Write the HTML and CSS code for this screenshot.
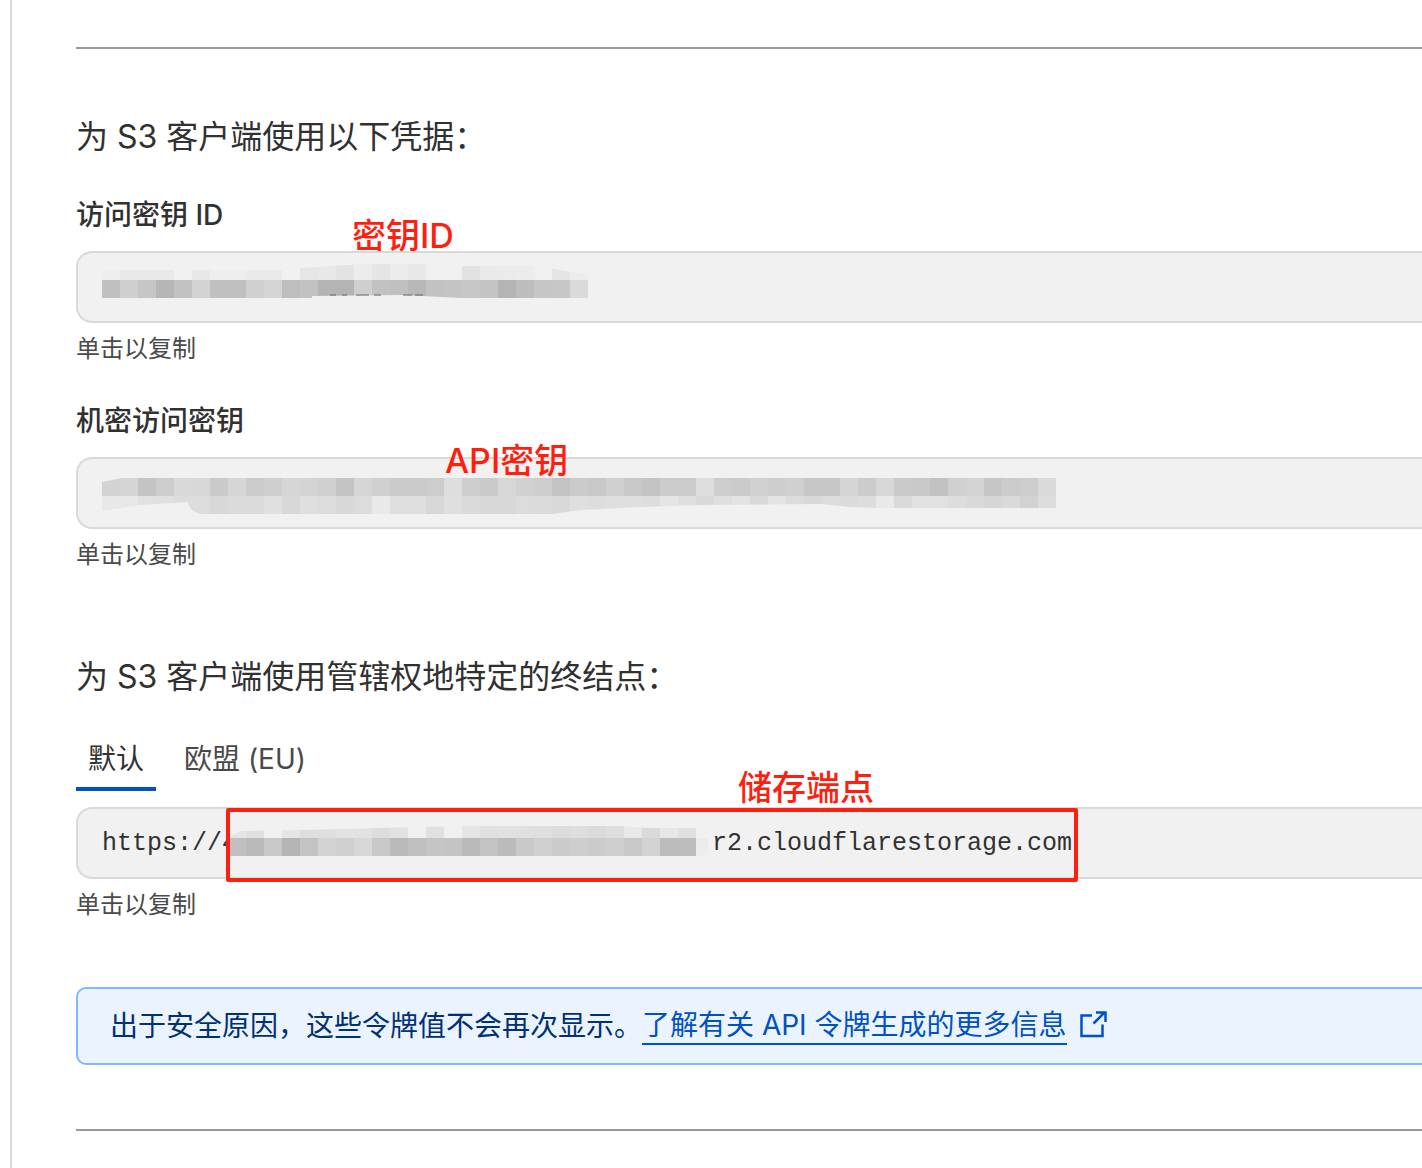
FILE: index.html
```html
<!DOCTYPE html>
<html lang="zh-CN">
<head>
<meta charset="utf-8">
<title>S3 客户端凭据</title>
<link rel="stylesheet" href="styles.css">
</head>
<body>
<main class="panel">
  <hr class="rule">

  <section class="section">
    <h2 class="heading">为 S3 客户端使用以下凭据：</h2>
    <div class="group">
      <label class="label" for="key-id">访问密钥 ID</label>
      <div class="holder">
        <button class="field" id="key-id" type="button">
          <svg class="mosaic" data-mosaic="keyId" width="486" height="68" viewBox="0 0 486 68" aria-hidden="true">
            <clipPath id="clip-keyId"><path d="M0 17H180L200 15L260 11H324L360 13H440L452 16L470 19L486 22V45H360L300 42L210 43V45H0Z"/></clipPath>
            <g clip-path="url(#clip-keyId)"></g>
            <path d="M228 42h6M240 42h5M254 42h13M272 42h7M301 42h9M313 42h8" stroke="#666" stroke-width="1"/>
          </svg>
        </button>
        <span class="note note-id">密钥ID</span>
      </div>
      <p class="hint">单击以复制</p>
    </div>
    <div class="group">
      <label class="label" for="secret">机密访问密钥</label>
      <div class="holder">
        <button class="field" id="secret" type="button">
          <svg class="mosaic" data-mosaic="secret" width="954" height="68" viewBox="0 0 954 68" aria-hidden="true">
            <clipPath id="clip-secret"><path d="M0 23L20 19H954V49H780L750 48L718 45L600 46L540 48L478 51L450 55H98L91 52L87 47L86 43L38 46L0 52Z"/></clipPath>
            <g clip-path="url(#clip-secret)"></g>
          </svg>
        </button>
        <span class="note note-secret">API密钥</span>
      </div>
      <p class="hint">单击以复制</p>
    </div>
  </section>

  <section class="section">
    <h2 class="heading">为 S3 客户端使用管辖权地特定的终结点：</h2>
    <div class="tabs" role="tablist">
      <button class="tab tab-active" type="button" role="tab" aria-selected="true">默认</button>
      <button class="tab" type="button" role="tab" aria-selected="false">欧盟 (EU)</button>
    </div>
    <div class="holder">
      <button class="field" type="button" aria-label="终结点">
        <span class="scheme">https://4</span>
        <svg class="mosaic" data-mosaic="endpoint" width="484" height="68" viewBox="0 0 484 68" aria-hidden="true">
          <clipPath id="clip-endpoint"><path d="M2 28L12 22L72 21L152 19L234 17H392L420 19H468V29H480V42L474 47H2Z"/></clipPath>
          <g clip-path="url(#clip-endpoint)"></g>
        </svg>
        <span>r2.cloudflarestorage.com</span>
      </button>
      <span class="outline"></span>
      <span class="note note-endpoint">储存端点</span>
    </div>
    <p class="hint">单击以复制</p>
  </section>

  <div class="alert">
    <span>出于安全原因，这些令牌值不会再次显示。</span>
    <a class="link" href="#"><span class="link-text">了解有关 API 令牌生成的更多信息</span>
      <svg class="external" width="28" height="32" viewBox="0 0 28 32" fill="none" stroke="currentColor" stroke-width="2.500" aria-hidden="true">
        <path d="M13 5.500H2.500V26H23.500V14.500"/><path d="M14.500 13.500L25.500 2.500M17 2.500H26.500V12"/>
      </svg>
    </a>
  </div>

  <hr class="rule">
</main>
<script src="mosaic.js"></script>
</body>
</html>
```

FILE: styles.css
```css
* {
  box-sizing: border-box;
}

body {
  margin: 0;
  background: #fff;
  color: #313131;
  font-family: Inter, "Noto Sans CJK SC", sans-serif;
  font-size: 28px;
  font-weight: 400;
  line-height: 40px;
  overflow-x: hidden;
}

.panel {
  display: flex;
  flex-direction: column;
  gap: 64px;
  min-height: 100vh;
  margin-left: 10px;
  padding: 47px 0 37px 64px;
  border-left: 2px solid #d9d9d9;
}

.rule {
  width: 100%;
  height: 2px;
  margin: 0;
  border: 0;
  background: #999;
}

.section {
  display: flex;
  flex-direction: column;
  padding-bottom: 16px;
}

.heading {
  margin: 0 0 34px;
  font-size: 32px;
  font-weight: 400;
  line-height: 48px;
}

.group + .group {
  margin-top: 34px;
}

.label {
  display: block;
  margin-bottom: 16px;
  font-weight: 500;
}

.holder {
  position: relative;
}

.field {
  display: flex;
  align-items: center;
  width: 100%;
  height: 72px;
  padding: 0 0 0 24px;
  border: 2px solid #d9d9d9;
  border-right: 0;
  border-radius: 16px 0 0 16px;
  background: #f1f1f1;
  color: #313131;
  font-family: "Liberation Mono", monospace;
  font-size: 25px;
  text-align: left;
  white-space: nowrap;
}

.scheme {
  flex: none;
  width: 126px;
}

.mosaic {
  position: relative;
  flex: none;
  background: #f1f1f1;
}

.hint {
  margin: 8px 0 0;
  color: #4a4a4a;
  font-size: 24px;
  line-height: 36px;
}

.tabs {
  display: flex;
  gap: 16px;
  margin-bottom: 16px;
}

.tab {
  padding: 4px 12px 8px;
  border: 0;
  border-bottom: 4px solid transparent;
  background: none;
  color: #4a4a4a;
  font-family: inherit;
  font-size: 28px;
  line-height: 40px;
}

.tab-active {
  border-bottom-color: #0051c3;
  color: #313131;
}

.note {
  position: absolute;
  color: #ff1f10;
  font-size: 34px;
  font-weight: 500;
  line-height: 40px;
  white-space: nowrap;
}

.note-id {
  left: 276px;
  top: -35px;
}

.note-secret {
  left: 369px;
  top: -16px;
}

.note-endpoint {
  left: 662px;
  top: -39px;
}

.outline {
  position: absolute;
  left: 150px;
  top: 1px;
  width: 852px;
  height: 74px;
  border: 4px solid #ff1f10;
  border-radius: 2px;
}

.alert {
  display: flex;
  align-items: center;
  height: 78px;
  margin-top: -16px;
  padding-left: 32px;
  border: 2px solid #82b6ff;
  border-right: 0;
  border-radius: 10px 0 0 10px;
  background: #ebf3ff;
  color: #003075;
  white-space: nowrap;
}

.link {
  display: flex;
  align-items: center;
  gap: 12px;
  color: #0051c3;
  text-decoration: none;
}

.link-text {
  border-bottom: 2px solid #0051c3;
  line-height: 36px;
}

.external {
  flex: none;
}
```

FILE: mosaic.js
```js
// Grey levels (hex) of the 18px blocks that hide each secret value.
const CELL = 18;
const mosaics = {
  keyId: {
    top: 9,
    rows: [
      "ee e9 e9 e9 f1 e8 ee ee ea ea f1 e6 e8 e3 ec e5 ec e8 f0 f0 e2 ea eb ec f0 e5 ec",
      "c0 cf c6 b6 c2 d2 c0 c0 d0 d5 be c2 b4 b4 cf c2 c0 b8 c2 c4 c7 c4 b4 bd c6 c7 da"
    ]
  },
  secret: {
    top: 19,
    rows: [
      "d3 d5 c4 cd d9 d8 ca d6 cc cf d6 d4 d0 c4 d6 d0 cb cb cd de ce ca d7 d1 cd c3 cb c8 d0 c8 c3 cc cc de cd cb d1 ce d0 c7 c7 d5 cc d7 ca c9 c2 d0 d4 c6 cc cd da",
      "e8 e8 e1 e0 dd dd d8 db db e0 d8 df dc d8 dc e9 df df d7 df da d8 d8 dc db d9 df dd df df dd e5 df d9 df e3 d9 e4 dc d8 dc db dd e9 da e2 e1 dd d9 d6 da d2 dd"
    ]
  },
  endpoint: {
    top: 11,
    rows: [
      "e5 df f0 e5 de df e3 e2 dd e2 f0 e1 f0 e5 e0 e1 e0 df dc de db de e8 da e7 e0",
      "c0 ba c8 b4 c3 d3 d0 d7 c8 ba c0 c5 c4 b9 c3 bb c9 d0 cb ce cb cf c8 d3 bc bd ec"
    ]
  }
};

document.querySelectorAll("[data-mosaic]").forEach((svg) => {
  const { top, rows } = mosaics[svg.dataset.mosaic];
  const group = svg.querySelector("g");
  rows.forEach((row, y) => {
    row.split(" ").forEach((level, x) => {
      const rect = document.createElementNS("http://www.w3.org/2000/svg", "rect");
      rect.setAttribute("x", x * CELL);
      rect.setAttribute("y", top + y * CELL);
      rect.setAttribute("width", CELL);
      rect.setAttribute("height", CELL);
      rect.setAttribute("fill", "#" + level + level + level);
      group.append(rect);
    });
  });
});
```
